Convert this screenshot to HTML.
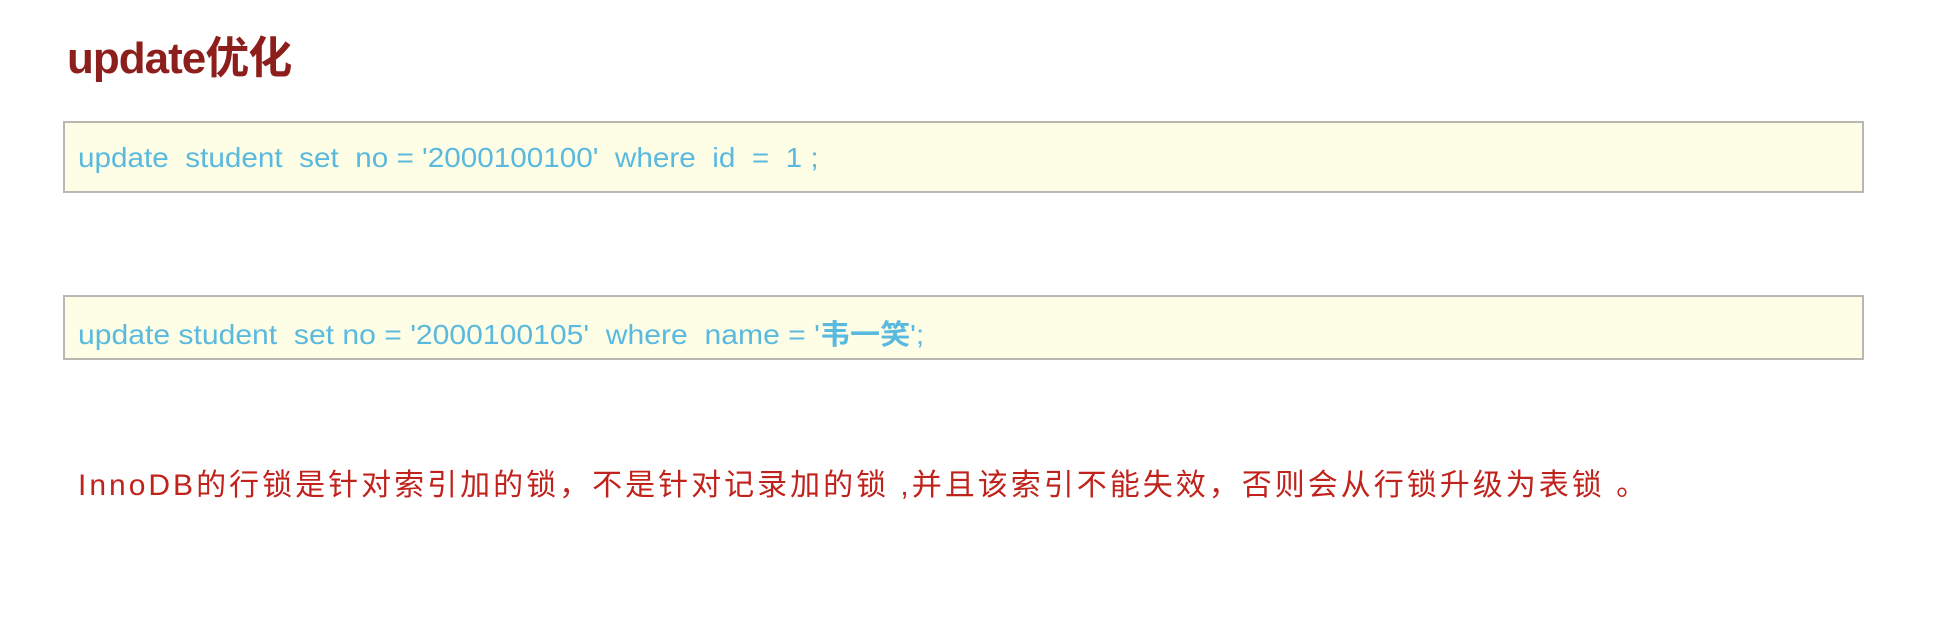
<!DOCTYPE html>
<html><head><meta charset="utf-8"><style>
body{margin:0;width:1942px;height:632px;background:#fff;position:relative;overflow:hidden;font-family:"Liberation Sans","Noto Sans CJK SC",sans-serif}
.t{position:absolute;left:67px;top:22px;font-size:44px;font-weight:bold;color:#8c1f1c;letter-spacing:-1px}
.box{position:absolute;left:63px;width:1801px;background:#fefee6;border:2px solid #b8b8b0;box-sizing:border-box}
.code{position:absolute;left:78px;color:#5ab9df;font-size:28px;white-space:pre;transform-origin:left top}
.r{position:absolute;left:78px;top:460px;color:#c0221c;font-size:30px;letter-spacing:3px;white-space:pre}
</style></head><body>
<div class="t">update优化</div>
<div class="box" style="top:121px;height:72px"></div>
<div class="code" style="top:142px;transform:scaleX(1.06)">update  student  set  no = '2000100100'  where  id  =  1 ;</div>
<div class="box" style="top:295px;height:65px"></div>
<div class="code" style="top:313px;transform:scaleX(1.075)">update student  set no = '2000100105'  where  name = '<b>韦一笑</b>';</div>
<div class="r">InnoDB的行锁是针对索引加的锁，不是针对记录加的锁 ,并且该索引不能失效，否则会从行锁升级为表锁 。</div>
</body></html>
